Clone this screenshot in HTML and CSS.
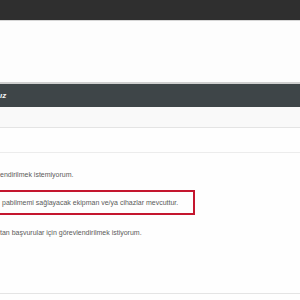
FILE: index.html
```html
<!DOCTYPE html>
<html lang="tr">
<head>
<meta charset="utf-8">
<link rel="stylesheet" href="styles.css">
</head>
<body>
<div class="topbar"></div>
<div class="band"></div>
<div class="header"><span class="title">ız</span></div>
<div class="row-light"></div>
<div class="row-white"></div>
<div class="options">
  <p class="opt first">endirilmek istemiyorum.</p>
  <div class="highlight"><p class="opt">pabilmemi sağlayacak ekipman ve/ya cihazlar mevcuttur.</p></div>
  <p class="opt third">tan başvurular için görevlendirilmek istiyorum.</p>
</div>
<div class="footer-line"></div>
</body>
</html>
```
FILE: styles.css
```css
html, body {
  margin: 0;
  padding: 0;
  background: #fefefe;
  font-family: "Liberation Sans", Arial, sans-serif;
  overflow: hidden;
}
.topbar {
  height: 20px;
  background: #2f2f2f;
  border-bottom: 1px solid #d6d6d6;
}
.band {
  height: 61px;
  background: #fdfdfd;
  border-bottom: 2px solid #cfcfcf;
}
.header {
  height: 23px;
  background: #3e4548;
  display: flex;
  align-items: center;
}
.title {
  color: #f2f2f2;
  font-weight: bold;
  font-style: italic;
  font-size: 8px;
}
.row-light {
  height: 20px;
  background: #f9f9f9;
  border-bottom: 1px solid #e4e4e4;
}
.row-white {
  height: 24px;
  background: #fefefe;
  border-bottom: 1px solid #ececec;
}
.options {
  padding-top: 17px;
  height: 123px;
}
.opt {
  margin: 0;
  font-size: 7px;
  line-height: 10px;
  color: #5a5a5a;
  white-space: nowrap;
}
.highlight {
  margin: 10px 0 0 -4px;
  width: 191px;
  height: 21px;
  border: 2px solid #c4162e;
  padding-left: 4px;
  display: flex;
  align-items: center;
}
.third {
  margin-top: 13px;
}
.footer-line {
  border-top: 1px solid #e4e4e4;
  height: 10px;
}
```
